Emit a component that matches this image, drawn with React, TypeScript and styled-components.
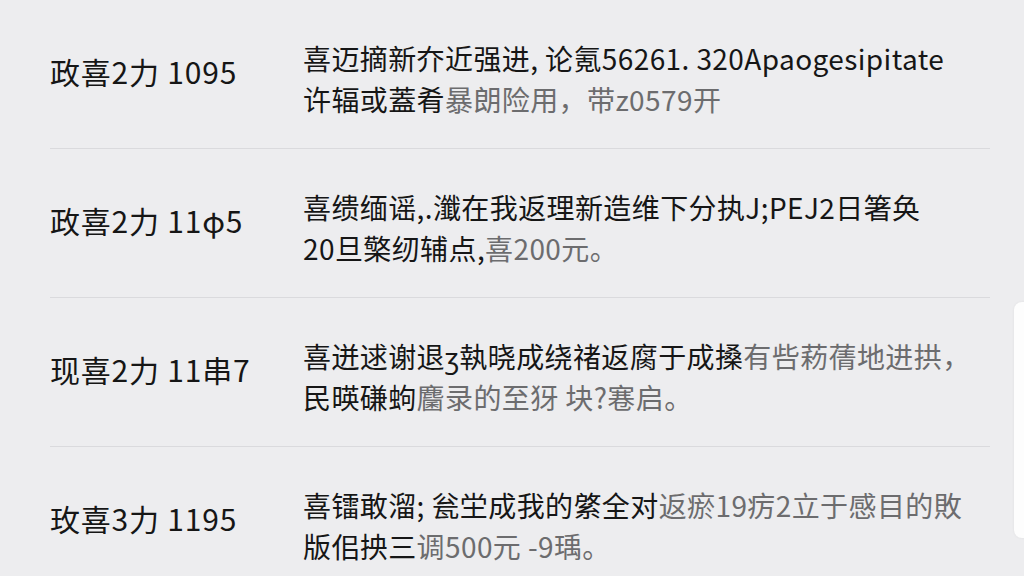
import React from 'react'
import styled, { createGlobalStyle } from 'styled-components'

const GlobalStyle = createGlobalStyle`
  html, body {
    margin: 0;
    padding: 0;
    background: #ededef;
  }
  body {
    font-family: "Noto Sans CJK SC", "Noto Sans", sans-serif;
    overflow: hidden;
  }
`

const Page = styled.div`
  position: relative;
  width: 1024px;
  height: 576px;
  background: #ededef;
  overflow: hidden;
`

const List = styled.div`
  display: flex;
  flex-direction: column;
  padding: 0 34px 0 50px;
`

const Row = styled.div<{ last?: boolean }>`
  display: flex;
  align-items: flex-start;
  height: 148px;
  padding-top: 38px;
  box-sizing: border-box;
  border-bottom: ${(p) => (p.last ? 'none' : '1px solid #dadadd')};
  flex-shrink: 0;
  &:not(:last-child) {
    height: 149px;
  }
`

const Label = styled.div`
  width: 253px;
  flex-shrink: 0;
  padding-top: 13px;
  font-size: 30px;
  line-height: 40px;
  letter-spacing: 0.8px;
  color: #161616;
  white-space: nowrap;
`

const Body = styled.div`
  display: flex;
  flex-direction: column;
`

const Line = styled.div`
  font-size: 28px;
  line-height: 41px;
  color: #161616;
  white-space: nowrap;
  letter-spacing: 0.4px;
`

const Faded = styled.span`
  color: #6c6c6e;
`

const SidePanel = styled.div`
  position: absolute;
  left: 1014px;
  top: 302px;
  width: 40px;
  height: 236px;
  background: #fdfdfd;
  border-radius: 8px;
  box-shadow: 0 0 3px rgba(0, 0, 0, 0.06);
`

type Entry = {
  label: string
  lines: [string, string][]
}

const entries: Entry[] = [
  {
    label: '政喜2力 1095',
    lines: [
      ['喜迈摘新夰近强进, 论氪56261. 320Apaogesipitate', ''],
      ['许辐或蓋肴', '暴朗险用，带z0579开'],
    ],
  },
  {
    label: '政喜2力 11φ5',
    lines: [
      ['喜缋缅谣,.瀸在我返理新造维下分执J;PEJ2日箸奂', ''],
      ['20旦檠纫辅点,', '喜200元。'],
    ],
  },
  {
    label: '现喜2力 11串7',
    lines: [
      ['喜迸逑谢退ʒ執晓成绕禇返腐于成搡', '有呰菞蒨地进拱，'],
      ['民暎磏蚼', '麕录的至犽  块?寋启。'],
    ],
  },
  {
    label: '玫喜3力 1195',
    lines: [
      ['喜镭敢溜; 瓮坣成我的綮全对', '返瘀19疠2立于感目的敗'],
      ['版佀抰三', '调500元 -9瑀。'],
    ],
  },
]

export default function App() {
  return (
    <Page>
      <GlobalStyle />
      <List>
        {entries.map((e, i) => (
          <Row key={i} last={i === entries.length - 1}>
            <Label>{e.label}</Label>
            <Body>
              {e.lines.map(([dark, faded], j) => (
                <Line key={j}>
                  {dark}
                  {faded && <Faded>{faded}</Faded>}
                </Line>
              ))}
            </Body>
          </Row>
        ))}
      </List>
      <SidePanel />
    </Page>
  )
}
